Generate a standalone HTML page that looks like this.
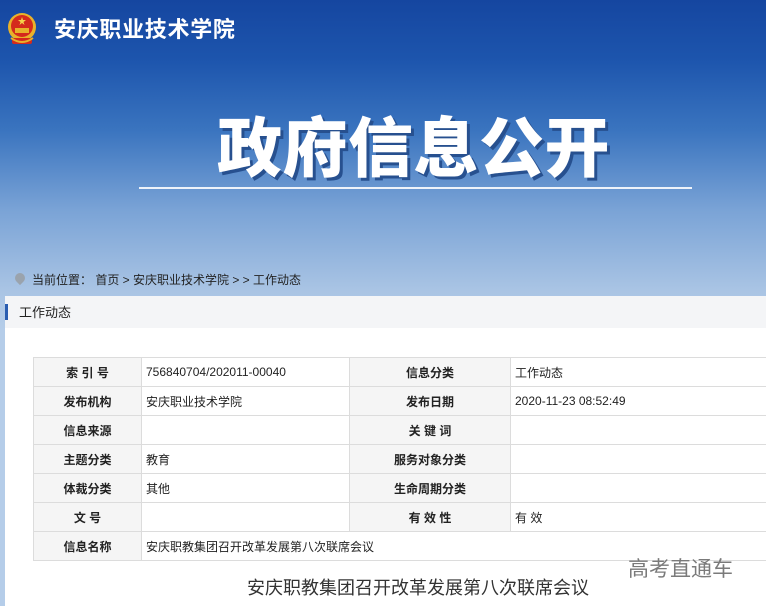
<!DOCTYPE html>
<html><head><meta charset="utf-8"><style>
*{margin:0;padding:0;box-sizing:border-box}
body{width:766px;height:606px;overflow:hidden;position:relative;font-family:"Liberation Sans","Noto Sans CJK SC",sans-serif;background:linear-gradient(180deg,#1546a0 0px,#1d55ad 60px,#3a74bf 130px,#7aa3d6 210px,#a9c4e4 290px,#b5cde9 330px)}
.logo{position:absolute;left:6px;top:12px;width:32px;height:36px}
.school{position:absolute;left:54px;top:12px;color:#fff;font-size:22px;font-weight:bold;letter-spacing:0.7px}
.big{position:absolute;left:217px;top:96px;color:#fff;font-size:65px;font-weight:900;letter-spacing:0.5px;text-shadow:3px 3px 0 #27508f}
.line{position:absolute;left:139px;top:187px;width:553px;height:2px;background:#eef3fa}
.crumb{position:absolute;left:32px;top:271px;font-size:12px;color:#222}
.pin{position:absolute;left:15px;top:273px;width:10px;height:10px;border-radius:50% 50% 50% 0;transform:rotate(-45deg);background:#9aa3ad}
.panel{position:absolute;left:5px;top:296px;width:761px;height:310px;background:#fff}
.strip{position:absolute;left:5px;top:296px;width:761px;height:32px;background:#f4f5f7}
.bar{position:absolute;left:5px;top:304px;width:3px;height:16px;background:#2a5db0}
.strip span{position:absolute;left:14px;top:6px;font-size:13px;color:#222}
table{position:absolute;left:33px;top:357px;border-collapse:collapse;font-size:12px;color:#222;table-layout:fixed;width:800px}
td{border:1px solid #dcdcdc;height:29px;padding:0 4px}
td.l{background:#f5f5f5;font-weight:bold;text-align:center}
.title{position:absolute;left:0;width:836px;text-align:center;top:574px;font-size:18px;color:#333}
.wm{position:absolute;left:628px;top:553px;font-size:21px;color:#7a7a7a}
</style></head><body>
<svg class="logo" viewBox="0 0 32 36"><circle cx="16" cy="15" r="14" fill="#e8b22a"/><circle cx="16" cy="14" r="11" fill="#d42a1c"/><rect x="9" y="16" width="14" height="5" fill="#e8b22a"/><polygon points="16,5 17,8 20,8 17.5,10 18.5,13 16,11 13.5,13 14.5,10 12,8 15,8" fill="#f5d34a"/><rect x="6" y="26" width="20" height="6" rx="2" fill="#d42a1c"/><path d="M5 26 Q16 34 27 26" stroke="#e8b22a" stroke-width="2" fill="none"/></svg>
<div class="school">安庆职业技术学院</div>
<div class="big">政府信息公开</div>
<div class="line"></div>
<div class="pin"></div>
<div class="crumb">当前位置：&nbsp;首页 &gt; 安庆职业技术学院 &gt; &gt; 工作动态</div>
<div class="panel"></div>
<div class="strip"><span>工作动态</span></div>
<div class="bar"></div>
<table>
<colgroup><col style="width:108px"><col style="width:208px"><col style="width:161px"><col style="width:323px"></colgroup>
<tr><td class="l">索 引 号</td><td>756840704/202011-00040</td><td class="l">信息分类</td><td>工作动态</td></tr>
<tr><td class="l">发布机构</td><td>安庆职业技术学院</td><td class="l">发布日期</td><td>2020-11-23 08:52:49</td></tr>
<tr><td class="l">信息来源</td><td></td><td class="l">关 键 词</td><td></td></tr>
<tr><td class="l">主题分类</td><td>教育</td><td class="l">服务对象分类</td><td></td></tr>
<tr><td class="l">体裁分类</td><td>其他</td><td class="l">生命周期分类</td><td></td></tr>
<tr><td class="l">文 号</td><td></td><td class="l">有 效 性</td><td>有 效</td></tr>
<tr><td class="l">信息名称</td><td colspan="3">安庆职教集团召开改革发展第八次联席会议</td></tr>
</table>
<div class="title">安庆职教集团召开改革发展第八次联席会议</div>
<div class="wm">高考直通车</div>
</body></html>
